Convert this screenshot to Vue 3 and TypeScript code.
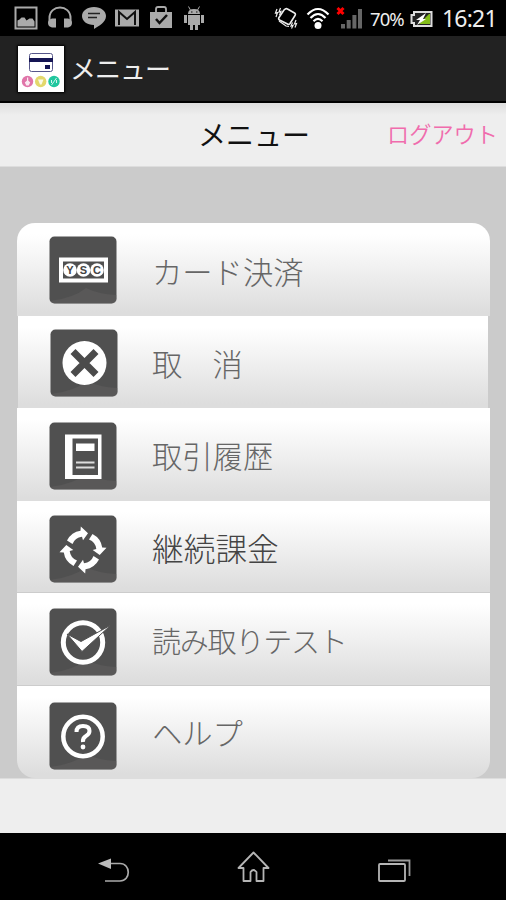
<script setup lang="ts">
interface MenuRow {
  id: string
  label: string
}

const rows: MenuRow[] = [
  { id: 'card', label: 'カード決済' },
  { id: 'cancel', label: '取　消' },
  { id: 'history', label: '取引履歴' },
  { id: 'recurring', label: '継続課金' },
  { id: 'test', label: '読み取りテスト' },
  { id: 'help', label: 'ヘルプ' },
]
const currencies: string[] = ['Y', 'S', 'C']
const quarterTurns: number[] = [0, 90, 180, 270]
</script>

<template>
  <div class="screen">
    <header class="status">
      <div class="notices">
        <svg width="24" height="24" viewBox="0 0 24 24">
          <path fill="#aaa" fill-rule="evenodd" d="M.5.5h23v23H.5zM2.5 2.5v19h19v-19z" />
          <path fill="#aaa" d="M3.5 20.500v-6l2-1 2-2h3l2 3 3-2h3l2 3v5z" />
        </svg>
        <svg width="24" height="24" viewBox="0 0 24 24">
          <path fill="none" stroke="#aaa" stroke-width="2" d="M1.500 17v-5C1.500-2 22.500-2 22.500 12v5" />
          <path fill="#aaa" d="M4 12.500h4v9H4q-4-1-4-4.500t4-4.500zm12 0h4q4 1 4 4.500t-4 4.500h-4z" />
        </svg>
        <svg width="24" height="24" viewBox="0 0 24 24">
          <path fill="#aaa" d="M12 1c7 0 12 4 12 9 0 6-7 10-12 13v-4C5 19 0 15 0 10S5 1 12 1z" />
          <path stroke="#222" stroke-width="1.600" d="M6 7.500h12M6 11.500h9" />
        </svg>
        <svg width="24" height="24" viewBox="0 0 24 24">
          <path fill="#aaa" d="M0 3.500h24v17H0z" />
          <path fill="none" stroke="#111" stroke-width="2" d="M4 19V6l8 7 8-7v13" />
        </svg>
        <svg width="24" height="24" viewBox="0 0 24 24">
          <path fill="#aaa" d="M1 6h22v16H1z" />
          <path fill="none" stroke="#aaa" stroke-width="1.800" d="M7 7V3q0-2 2-2h6q2 0 2 2v4" />
          <path fill="none" stroke="#111" stroke-width="2.500" d="m7 13 3.500 4L18 9" />
        </svg>
        <svg width="22" height="24" viewBox="0 0 22 24">
          <path fill="#aaa" d="M5 8q0-5 6-5t6 5zM5 9h12v10H5zM1 9h3v8H1zm17 0h3v8h-3zM7 18h3v6H7zm5 0h3v6h-3z" />
          <path stroke="#aaa" d="M5.500.500 8 5m8.500-4.500L14 5" />
          <path fill="#111" d="M8 5.500h1.500v1H8zm5 0h1.500v1H13z" />
        </svg>
      </div>
      <div class="system">
        <svg class="vibrate" width="24" height="24" viewBox="0 0 24 24">
          <path fill="none" stroke="#eee" stroke-width="1.600" stroke-linejoin="round" d="M10 4q2-2 3.500-1l7 4q1.500 1 .5 2.500l-5 8q-1 1.500-2.500.5l-8-4q-1.500-1-.5-2.500z" />
          <path fill="none" stroke="#eee" stroke-width="1.200" d="m3 3-1.500 4 2-.5L2 11M6.500 2 5 6l2-.5L5.500 9M5 15l7 5 3 .5M22 14l-1.500 4 2-.5L21 21.500M18.500 16.500 17 20l2-.5-1.500 3" />
        </svg>
        <svg class="wifi" width="24" height="24" viewBox="0 0 24 24">
          <path fill="none" stroke="#fff" stroke-width="2.200" d="M1.500 8.500q10.500-11 21 0M4.500 12q7.500-8 15 0M7.500 15.200q4.500-4.500 9 0" />
          <circle cx="12" cy="19.500" r="3.500" fill="#fff" />
        </svg>
        <svg class="signal" width="28" height="24" viewBox="0 0 28 24">
          <path fill="#666" d="M5 18h4v4.500H5zm5.700-4h4v8.500h-4zm5.700-5h4v13.500h-4zM22 3h4v19.500h-4z" />
          <path stroke="red" stroke-width="3" d="m1.500 2 6 6m0-6-6 6" />
        </svg>
        <span class="percent">70%</span>
        <svg class="battery" width="23" height="18" viewBox="0 0 23 18">
          <path fill="#222" stroke="#ddd" stroke-width="2" d="M4 2h17.500v14H4v-3H1.500V5H4z" />
          <path fill="#83bd18" d="M19 4h1v10H9z" />
          <path fill="#fff" d="m16 3-10 7h4l-3 5 9-6h-3z" />
        </svg>
        <span class="clock">16:21</span>
      </div>
    </header>
    <div class="appbar">
      <svg class="logo" width="46" height="46" viewBox="0 0 46 46">
        <path fill="#fff" d="M0 0h46v46H0z" />
        <rect x="11.500" y="7.500" width="23" height="18" rx="2" fill="#fff" stroke="#56568a" />
        <path fill="#151553" d="M11 12h24v4H11zm16 7h5v4h-5z" />
        <circle cx="9.500" cy="35.500" r="5.700" fill="#e075a9" />
        <circle cx="22.700" cy="35.500" r="5.700" fill="#e3d86c" />
        <circle cx="36" cy="35.500" r="5.700" fill="#20c69e" />
        <path fill="#fff" fill-opacity=".85" d="M9 31.500h1.200v3l2 2-1.500 3H8.300l-1.500-3 2.200-2zM20 33.500h5.500l-2 5h-1.500z" />
        <path fill="none" stroke="#fff" stroke-opacity=".8" d="m33.500 39 5-7M33.500 34v3m5-3v3" />
      </svg>
      <span class="app-title">メニュー</span>
    </div>
    <div class="heading">
      <h1>メニュー</h1>
      <a class="logout">ログアウト</a>
    </div>
    <main>
      <ul>
        <li v-for="row in rows" :key="row.id" :class="row.id">
          <svg class="tile" width="68" height="68" viewBox="0 0 68 68">
            <rect x=".5" y=".5" width="67" height="67" rx="5" fill="#505050" />
            <path fill="#6a6868" d="M37 52q12 6 30.500 7v3.500q0 5-5 5H5.500q-3 0-4.500-2.500Q25 62 37 52z" opacity=".35" />
            <g v-if="row.id === 'card'">
              <path fill="#fff" fill-rule="evenodd" d="M10 21.500h49v25H10zm4 4v17h41v-17z" />
              <g v-for="(sign, i) in currencies" :key="sign">
                <circle :cx="21 + i * 13.500" cy="34" r="6.800" fill="#fff" />
                <text class="currency" :x="21 + i * 13.500" y="38">{{ sign }}</text>
              </g>
            </g>
            <g v-else-if="row.id === 'cancel'">
              <circle cx="34.500" cy="34" r="22" fill="#fff" />
              <path stroke="#4b4b4b" stroke-width="7" d="m23 22.500 23 23m0-23-23 23" />
            </g>
            <g v-else-if="row.id === 'history'">
              <path fill="#fff" fill-rule="evenodd" d="M16 12.500h36.500v44.500H16zm7.500 4v36.500H49V16.500z" />
              <path fill="#fff" d="M27 21.500h18.500v7.500H27z" />
              <path stroke="#ddd" stroke-width="2" d="M27 40.500h18.500M27 45.500h18.500" />
            </g>
            <g v-else-if="row.id === 'recurring'" fill="#fff">
              <path v-for="angle in quarterTurns" :key="angle" :transform="`rotate(${angle} 34 35)`" d="M18 25.500Q22.500 17 31.500 15.800L31.800 11.500 39 18.300 34 25.300 33 21.700Q26 22.500 23.500 29z" />
            </g>
            <g v-else-if="row.id === 'test'">
              <circle cx="34" cy="34.500" r="19.700" fill="none" stroke="#fff" stroke-width="5" />
              <path fill="#fff" stroke="#505050" stroke-width="1" d="m18 26 14 7.500L62 17 33 43.500z" />
            </g>
            <g v-else>
              <circle cx="34" cy="34.500" r="19.700" fill="none" stroke="#fff" stroke-width="4.500" />
              <path fill="none" stroke="#fff" stroke-width="4" d="M27.500 30q0-6 6.500-6t6.500 5q0 3-3.500 5t-3 6" />
              <circle cx="34" cy="45" r="2.400" fill="#fff" />
            </g>
          </svg>
          <span class="label">{{ row.label }}</span>
        </li>
      </ul>
    </main>
    <div class="footer"></div>
    <nav>
      <svg width="34" height="34" viewBox="0 0 34 34">
        <path fill="none" stroke="#aaa" stroke-width="1.700" d="M13 14.500h10c11 0 11 17.500 0 17.500H8" />
        <path fill="#bbb" d="M1 14.500 14 9.500v10.500z" />
      </svg>
      <svg width="34" height="34" viewBox="0 0 34 34">
        <path fill="none" stroke="#b5b5b5" stroke-width="1.800" stroke-linejoin="round" d="m16.500 3.500 15 15.500h-5v13h-7V23q-3-4-6 0v9H6.500V19h-5z" />
      </svg>
      <svg width="34" height="34" viewBox="0 0 34 34">
        <rect x="2" y="15" width="26" height="17" rx="1" fill="none" stroke="#b5b5b5" stroke-width="1.800" />
        <path fill="none" stroke="#999" stroke-width="1.800" d="M11 11.500h21.500V27" />
      </svg>
    </nav>
  </div>
</template>

<style>
body {
  margin: 0;
  background: #000;
}
</style>

<style scoped>
.screen {
  width: 506px;
  height: 900px;
  overflow: hidden;
  font-family: "Noto Sans CJK JP", sans-serif;
  background: #cbcbcb;
}
svg {
  display: block;
  flex: none;
}
.status {
  height: 36px;
  background: #000;
  display: flex;
  justify-content: space-between;
}
.notices {
  display: flex;
  gap: 9.800px;
  padding: 6px 0 0 14px;
}
.system {
  display: flex;
  color: #eee;
  font-family: Roboto, "Noto Sans", sans-serif;
  white-space: nowrap;
}
.vibrate { margin: 6px 8px 0 0; }
.wifi { margin: 6px 6px 0 0; }
.signal { margin: 6px 6px 0 0; }
.percent {
  width: 35px;
  font-family: "Noto Sans", sans-serif;
  font-size: 18.500px;
  line-height: 38px;
  letter-spacing: -0.900px;
}
.battery { margin: 10px 9px 0 5px; }
.clock {
  width: 64px;
  font-family: "Noto Sans", sans-serif;
  font-size: 23px;
  letter-spacing: -0.800px;
  line-height: 36px;
}
.appbar {
  height: 67px;
  box-sizing: border-box;
  background: #222;
  border-bottom: 2px solid #000;
  display: flex;
  padding: 10px 18px;
}
.logo { box-shadow: 0 0 2px 1px #000; }
.app-title {
  color: #eee;
  font-size: 26px;
  line-height: 44px;
  letter-spacing: -1px;
  margin-left: 6px;
}
.heading {
  height: 64px;
  box-sizing: border-box;
  background: linear-gradient(#dedede, #eee 12px);
  border-bottom: 1px solid #ddd;
  display: grid;
  grid-template-columns: 1fr auto 1fr;
  align-items: start;
}
h1 {
  grid-column: 2;
  margin: 0 0 0 2px;
  font-size: 28px;
  font-weight: 400;
  line-height: 62px;
  color: #111;
}
.logout {
  justify-self: end;
  color: #f06cad;
  font-size: 22.200px;
  font-weight: 350;
  line-height: 60px;
  margin-right: 8px;
}
main {
  height: 611px;
  box-sizing: border-box;
  padding: 56px 16px 0 17px;
}
ul {
  list-style: none;
  margin: 0;
  padding: 0;
  display: grid;
  grid-template-rows: 93px 92px 93px 92px 93px 92px;
}
li {
  box-sizing: border-box;
  display: flex;
  align-items: flex-start;
  padding: 13px 0 0 32px;
  background: linear-gradient(#fff 12%, #f4f4f4 40%, #ddd 96%);
}
.card {
  border-radius: 18px 18px 0 0;
}
.cancel {
  margin: 0 2px 0 1px;
}
.history, .recurring { padding-top: 13.500px; }
.test { padding-top: 15px; }
.recurring, .test { border-bottom: 1.500px solid #ccc; }
.help {
  padding-top: 16px;
  border-radius: 0 0 18px 18px;
}
.label {
  margin-left: 35px;
  color: #666;
  font-size: 30.300px;
  font-weight: 300;
  line-height: 70px;
  white-space: pre;
}
.cancel .label {
  margin-left: 34px;
  line-height: 69px;
}
.history .label { line-height: 67px; }
.recurring .label {
  color: #444;
  font-size: 31.700px;
  line-height: 65px;
}
.test .label {
  font-size: 29px;
  letter-spacing: -1.200px;
  line-height: 65px;
}
.help .label { line-height: 60px; }
.currency {
  fill: #444;
  font: 700 11px "Liberation Sans", sans-serif;
  text-anchor: middle;
}
.footer {
  height: 55px;
  box-sizing: border-box;
  background: #eee;
  border-top: 1px solid #ddd;
}
nav {
  height: 67px;
  box-sizing: border-box;
  background: #000;
  display: flex;
  justify-content: space-between;
  padding: 16px 95px 0 97px;
}
</style>
